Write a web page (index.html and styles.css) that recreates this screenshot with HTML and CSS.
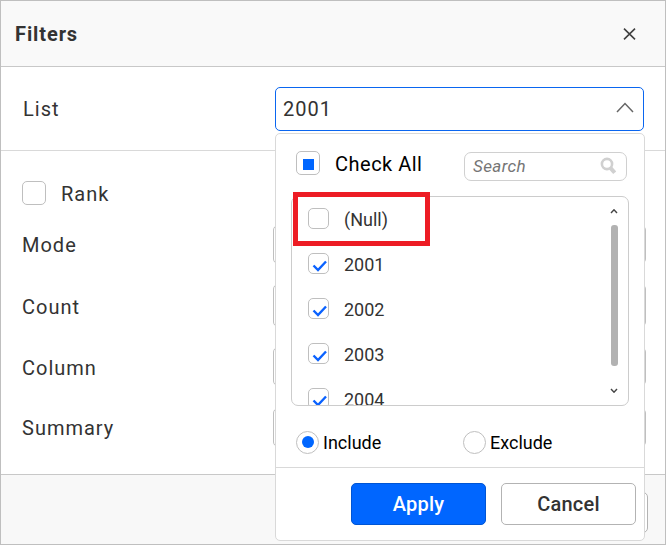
FILE: index.html
```
<!DOCTYPE html>
<html lang="en">
<head>
<meta charset="utf-8">
<title>Filters</title>
<link rel="stylesheet" href="styles.css">
</head>
<body>
<div class="dialog">
  <header class="header">
    <h1 class="title">Filters</h1>
    <svg class="close" width="13" height="12" viewBox="0 0 13 12"><path d="M1 0.7L12 11.3M12 0.7L1 11.3"/></svg>
  </header>
  <section class="list-row">
    <span class="label">List</span>
    <div class="select">
      <span>2001</span>
      <svg class="chevron" width="18" height="11" viewBox="0 0 18 11"><path d="M1 10L9 1.5L17 10"/></svg>
    </div>
    <div class="panel">
      <div class="panel-top">
        <span class="box box-large"><i class="partial"></i></span>
        <span class="check-all">Check All</span>
        <div class="search">
          <span>Search</span>
          <svg width="17" height="18" viewBox="0 0 17 18"><circle cx="7" cy="7" r="5.1"/><path d="M10.2 10.6L14.7 15.8"/></svg>
        </div>
      </div>
      <div class="options">
        <ul class="items">
          <li><span class="box"></span><span class="null-text">(Null)</span></li>
          <li><span class="box"><svg class="tick" width="16" height="14" viewBox="0 0 16 14"><path d="M1.5 6.5L6 11L14 2.5"/></svg></span><span>2001</span></li>
          <li><span class="box"><svg class="tick" width="16" height="14" viewBox="0 0 16 14"><path d="M1.5 6.5L6 11L14 2.5"/></svg></span><span>2002</span></li>
          <li><span class="box"><svg class="tick" width="16" height="14" viewBox="0 0 16 14"><path d="M1.5 6.5L6 11L14 2.5"/></svg></span><span>2003</span></li>
          <li><span class="box"><svg class="tick" width="16" height="14" viewBox="0 0 16 14"><path d="M1.5 6.5L6 11L14 2.5"/></svg></span><span>2004</span></li>
        </ul>
        <div class="scroll">
          <svg width="8" height="6" viewBox="0 0 8 6"><path d="M1 5L4 1.7L7 5"/></svg>
          <div class="thumb"></div>
          <svg width="8" height="6" viewBox="0 0 8 6"><path d="M1 1L4 4.3L7 1"/></svg>
        </div>
      </div>
      <div class="highlight"></div>
      <div class="modes">
        <div class="mode"><span class="radio"><i class="dot"></i></span><span>Include</span></div>
        <div class="mode"><span class="radio"></span><span>Exclude</span></div>
      </div>
      <div class="actions">
        <div class="button primary">Apply</div>
        <div class="button">Cancel</div>
      </div>
    </div>
  </section>
  <section class="rank">
    <div class="rank-row"><span class="box box-large"></span><span class="rank-label">Rank</span></div>
    <div class="field"><span>Mode</span><div class="input"></div></div>
    <div class="field lower"><span>Count</span><div class="input tall"></div></div>
    <div class="field lower"><span>Column</span><div class="input"></div></div>
    <div class="field"><span>Summary</span><div class="input"></div></div>
  </section>
  <footer class="footer"><div class="footer-button"></div></footer>
</div>
</body>
</html>
```
FILE: styles.css
```
* { box-sizing: border-box; }
body {
  margin: 0;
  font-family: Roboto, "Liberation Sans", sans-serif;
  font-size: 20px;
  line-height: 24px;
  letter-spacing: 1px;
  color: #333;
}
svg { display: block; fill: none; flex: none; }
.dialog {
  width: 666px;
  height: 545px;
  border: 1px solid #bfbfbf;
  background: #fff;
  display: flex;
  flex-direction: column;
  overflow: hidden;
}
.header {
  height: 66px;
  flex: none;
  display: flex;
  align-items: center;
  justify-content: space-between;
  padding: 0 29px 0 14px;
  background: #f9f9f9;
  border-bottom: 1px solid #c8c8c8;
}
.title { margin: 0; font-size: 20px; font-weight: 700; letter-spacing: 0.9px; }
.close path { stroke: #404040; stroke-width: 1.6; }
.list-row {
  position: relative;
  height: 84px;
  flex: none;
  display: flex;
  align-items: center;
  justify-content: space-between;
  padding: 0 21px 0 22px;
  border-bottom: 1px solid #d9d9d9;
}
.select {
  width: 369px;
  height: 44px;
  display: flex;
  align-items: center;
  justify-content: space-between;
  padding: 0 9px 0 7px;
  border: 1px solid #0a66f0;
  border-radius: 5px;
}
.chevron { margin-top: -3px; }
.chevron path { stroke: #666; stroke-width: 1.5; }
.panel {
  position: absolute;
  z-index: 2;
  left: 274px;
  top: 66px;
  width: 370px;
  height: 408px;
  background: #fff;
  border: 1px solid #d9d9d9;
  border-radius: 5px;
  display: flex;
  flex-direction: column;
}
.panel-top { display: flex; height: 62px; flex: none; padding: 17px 17px 0 20px; align-items: flex-start; }
.check-all { margin-left: 15px; color: #000; letter-spacing: 0.5px; width: 129px; line-height: 26px; }
.box {
  width: 21px;
  height: 21px;
  flex: none;
  border: 1px solid #bfbfbf;
  border-radius: 5px;
  display: flex;
  align-items: center;
  justify-content: center;
  background: #fff;
}
.box-large { width: 24px; height: 24px; }
.partial { width: 11px; height: 11px; background: #0066ff; margin-left: 1px; margin-top: 3px; }
.search {
  width: 163px;
  height: 29px;
  margin-top: 1px;
  border: 1px solid #d0d0d0;
  border-radius: 7px;
  display: flex;
  align-items: center;
  justify-content: space-between;
  padding: 0 9px 2px 8px;
  font-size: 17px;
  font-style: italic;
  letter-spacing: 0.4px;
  color: #757575;
}
.search svg { margin-top: 1px; }
.search circle, .search path { stroke: #d0d0d0; stroke-width: 2.6; }
.search path { stroke-width: 4; }
.options {
  height: 210px;
  flex: none;
  margin: 0 15px;
  border: 1px solid #ccc;
  border-radius: 7px;
  display: flex;
  justify-content: space-between;
  overflow: hidden;
}
.items { list-style: none; margin: 0; padding: 0 0 0 16px; font-size: 18px; letter-spacing: 0; }
.items li { height: 45px; display: flex; align-items: center; gap: 15px; }
.items .box { margin-bottom: 2px; }
.tick { margin: 5px 0 0 3px; }
.tick path { stroke: #0a62ff; stroke-width: 2.4; }
.scroll { width: 8px; margin: 11px 10px 0 0; display: flex; flex-direction: column; align-items: center; }
.scroll path { stroke: #444; stroke-width: 1.4; }
.thumb { width: 7px; height: 141px; margin: 11px 0 22px; border-radius: 3px; background: #b2b2b2; }
.highlight {
  position: absolute;
  left: 17px;
  top: 58px;
  width: 137px;
  height: 54px;
  border: 5px solid #ed1c24;
}
.modes { display: flex; height: 62px; flex: none; padding: 25px 20px 0; border-bottom: 1px solid #d9d9d9; font-size: 18px; letter-spacing: 0; color: #000; }
.mode { width: 167px; flex: none; height: 23px; display: flex; align-items: center; gap: 4px; }
.radio { width: 23px; height: 23px; border: 1px solid #bfbfbf; border-radius: 50%; display: flex; align-items: center; justify-content: center; flex: none; }
.dot { width: 12px; height: 12px; border-radius: 50%; background: #0066ff; margin-bottom: 1px; }
.actions { display: flex; gap: 15px; padding: 15px 8px 0 75px; }
.button {
  width: 135px;
  height: 42px;
  border: 1px solid #b3b3b3;
  border-radius: 5px;
  display: flex;
  align-items: center;
  justify-content: center;
  font-weight: 500;
  letter-spacing: 0.2px;
}
.primary { color: #fff; background: #0066ff; border-color: #0055d4; }
.rank { height: 324px; flex: none; border-bottom: 1px solid #c8c8c8; padding: 30px 19px 0 21px; }
.rank-row { display: flex; align-items: center; gap: 15px; height: 24px; margin-bottom: 9px; }
.rank-label { padding-top: 2px; }
.field { height: 61px; display: flex; align-items: center; justify-content: space-between; }
.field.lower span { padding-top: 2px; }
.input { width: 373px; height: 39px; border: 1px solid #bfbfbf; border-radius: 5px; }
.input.tall { height: 43px; }
.footer { flex: 1; background: #f8f8f8; display: flex; justify-content: flex-end; padding: 17px 17px 0; }
.footer-button { width: 135px; height: 41px; border: 1px solid #b3b3b3; border-radius: 5px; background: #fff; }
```
